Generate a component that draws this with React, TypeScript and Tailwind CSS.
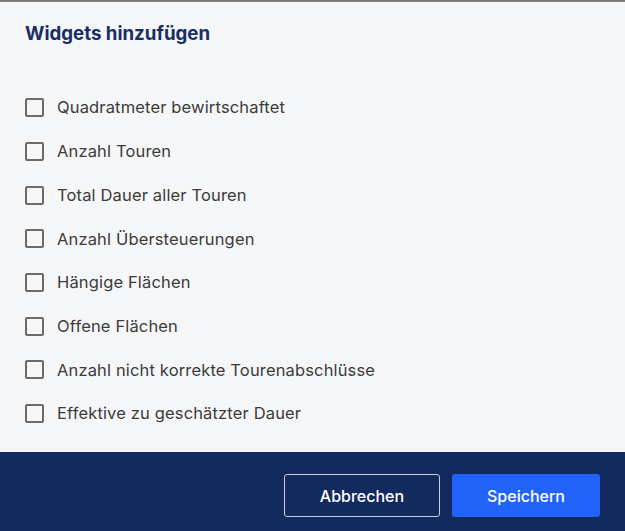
import React, { useState } from 'react';

const widgets = [
  'Quadratmeter bewirtschaftet',
  'Anzahl Touren',
  'Total Dauer aller Touren',
  'Anzahl Übersteuerungen',
  'Hängige Flächen',
  'Offene Flächen',
  'Anzahl nicht korrekte Tourenabschlüsse',
  'Effektive zu geschätzter Dauer',
];

export default function App() {
  const [selected, setSelected] = useState<string[]>([]);

  const toggle = (name: string) => {
    setSelected((prev) =>
      prev.includes(name) ? prev.filter((n) => n !== name) : [...prev, name]
    );
  };

  return (
    <div className="w-[625px] h-[531px] flex flex-col bg-[#f5f6f8] font-['Inter',sans-serif] overflow-hidden">
      <div className="h-[2px] bg-[#7b7b7b]" />
      <div className="h-px bg-white" />

      <div className="flex-1 flex flex-col px-[25px] pt-[19px]">
        <h2 className="text-[18.7px] leading-6 font-bold text-[#1a2d66]">Widgets hinzufügen</h2>

        <div className="mt-[40px] flex flex-col">
          {widgets.map((name) => (
            <label
              key={name}
              className="h-[43.7px] flex items-center gap-[13px] cursor-pointer"
              onClick={() => toggle(name)}
            >
              <span className="w-[19px] h-[19px] border-2 border-[#6b6b6b] rounded-[2px] flex items-center justify-center">
                {selected.includes(name) && <span className="w-[9px] h-[9px] bg-[#6b6b6b]" />}
              </span>
              <span className="text-[16.5px] tracking-[0.15px] text-[#3b3b3b]">{name}</span>
            </label>
          ))}
        </div>
      </div>

      <div className="h-[79px] bg-[#132a5f] flex justify-end items-start gap-3 pt-[22px] pr-[25px]">
        <button className="w-[156px] h-[43px] rounded-[3px] border border-[#c9ccd6] text-white text-[16px] font-medium">
          Abbrechen
        </button>
        <button className="w-[148px] h-[43px] rounded-[3px] bg-[#2264fb] text-white text-[16px] font-medium">
          Speichern
        </button>
      </div>
    </div>
  );
}
